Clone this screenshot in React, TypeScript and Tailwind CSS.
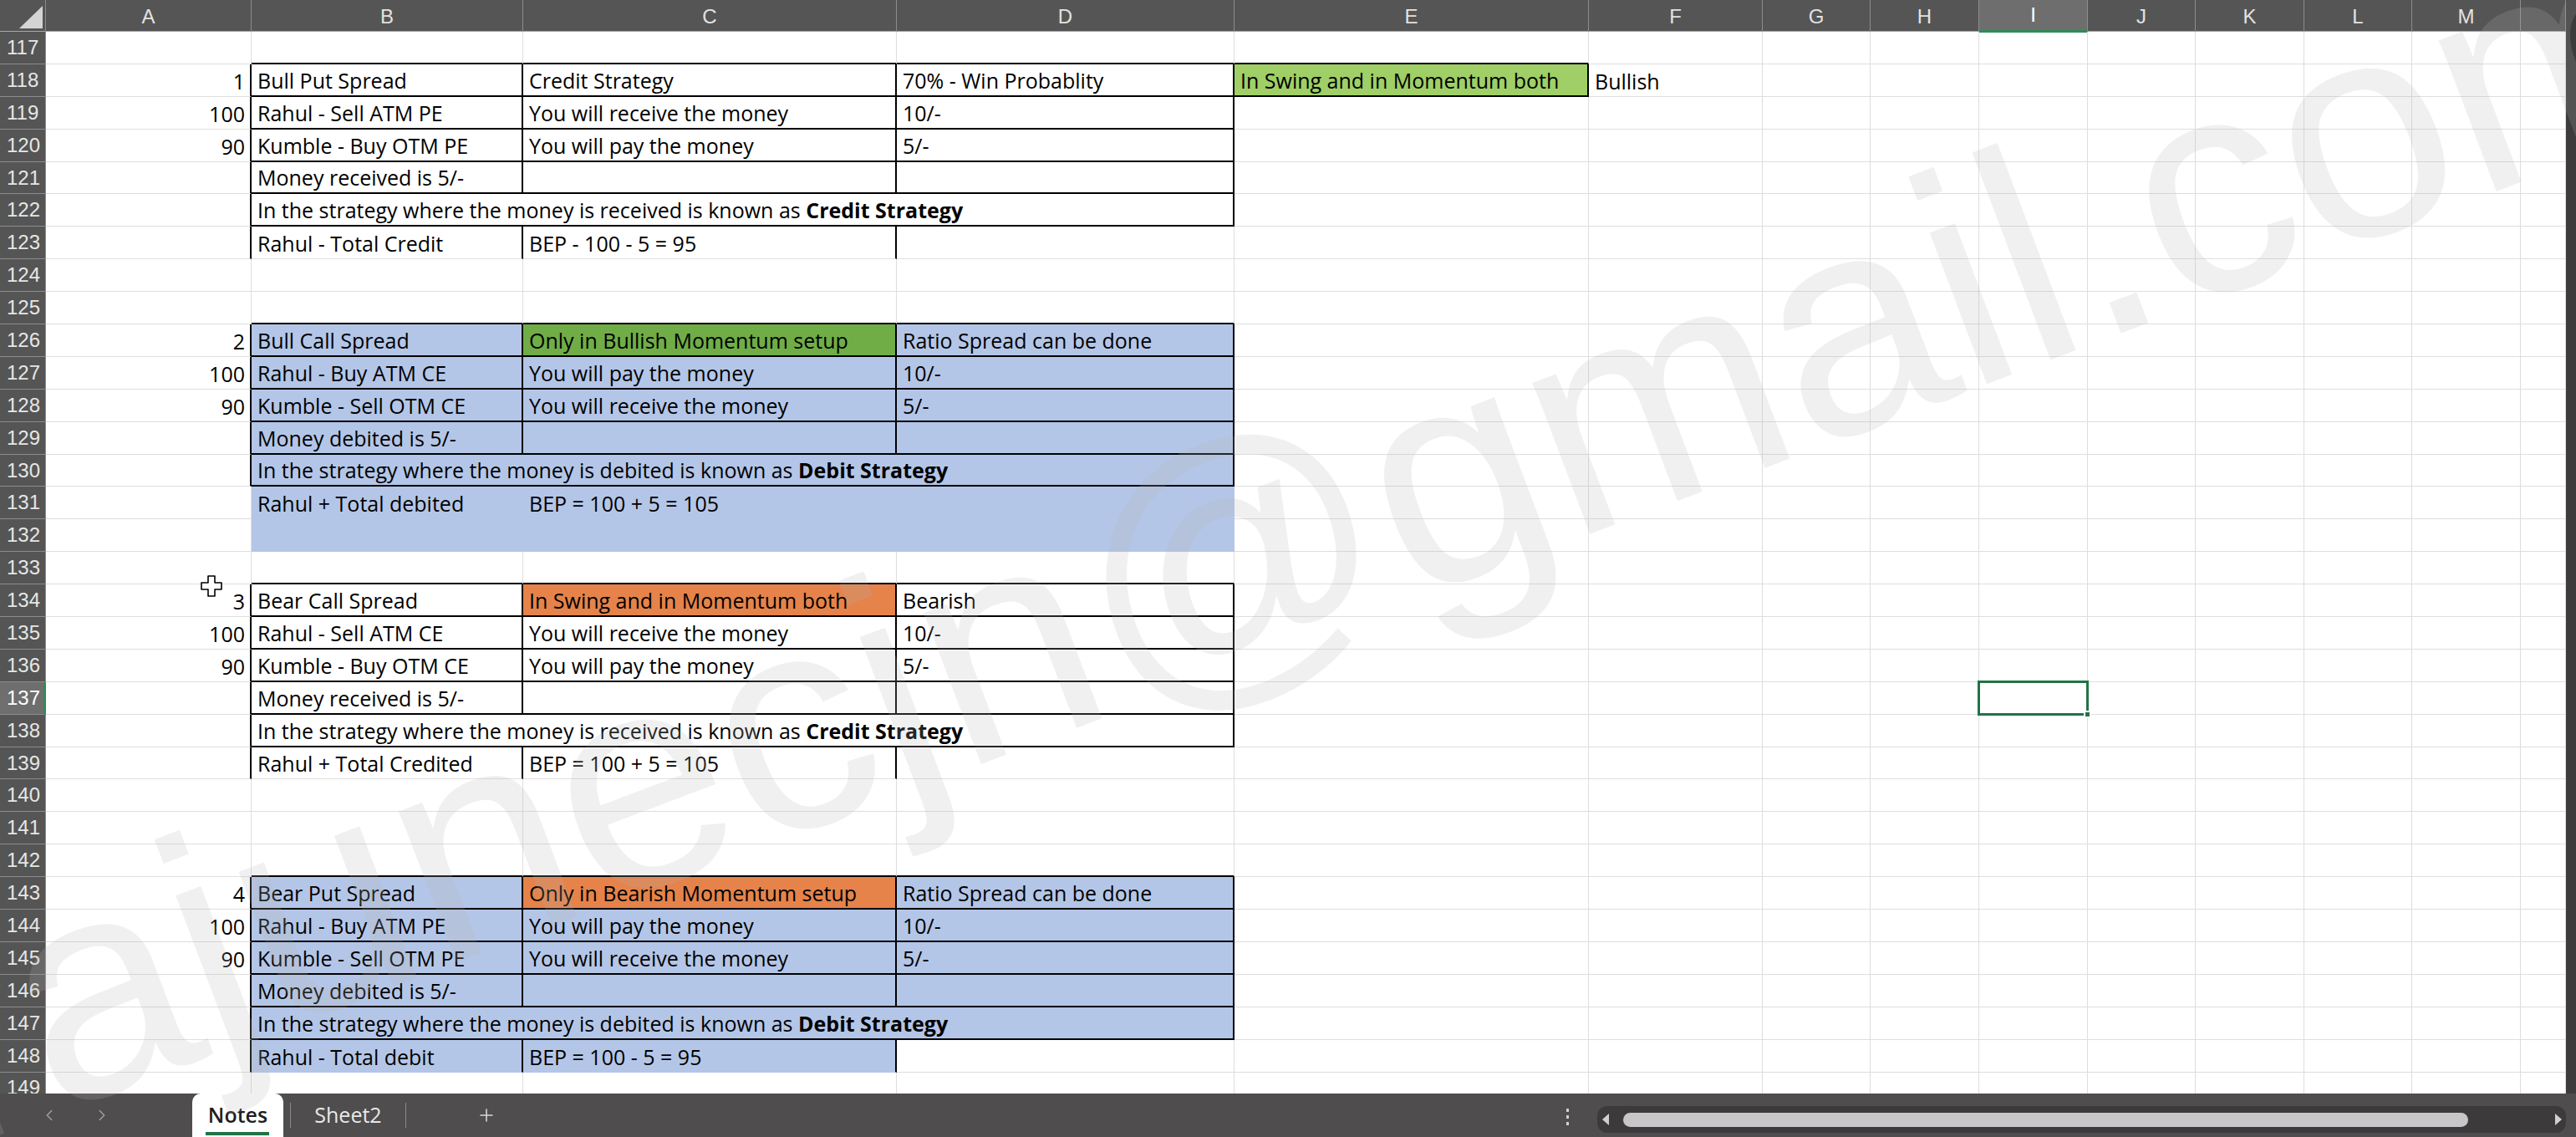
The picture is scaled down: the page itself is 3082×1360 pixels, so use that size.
import React from 'react';
import { ChevronLeft, ChevronRight, Plus } from 'lucide-react';

const COLS = ['A', 'B', 'C', 'D', 'E', 'F', 'G', 'H', 'I', 'J', 'K', 'L', 'M', 'N'];
const GRID =
  'grid grid-cols-[55px_246px_325px_447px_404px_424px_208px_129px_130px_130px_129px_130px_129px_130px_54px]';

type Row = { a?: string; b?: string; c?: string; d?: string; e?: string; f?: string; merged?: React.ReactNode };

const received = (
  <>
    In the strategy where the money is received is known as <b className="font-bold">Credit Strategy</b>
  </>
);
const debited = (
  <>
    In the strategy where the money is debited is known as <b className="font-bold">Debit Strategy</b>
  </>
);

const DATA: Record<number, Row> = {
  118: { a: '1', b: 'Bull Put Spread', c: 'Credit Strategy', d: '70% - Win Probablity', e: 'In Swing and in Momentum both', f: 'Bullish' },
  119: { a: '100', b: 'Rahul - Sell ATM PE', c: 'You will receive the money', d: '10/-' },
  120: { a: '90', b: 'Kumble - Buy OTM PE', c: 'You will pay the money', d: '5/-' },
  121: { b: 'Money received is 5/-' },
  122: { merged: received },
  123: { b: 'Rahul - Total Credit', c: 'BEP - 100 - 5 = 95' },
  126: { a: '2', b: 'Bull Call Spread', c: 'Only in Bullish Momentum setup', d: 'Ratio Spread can be done' },
  127: { a: '100', b: 'Rahul - Buy ATM CE', c: 'You will pay the money', d: '10/-' },
  128: { a: '90', b: 'Kumble - Sell OTM CE', c: 'You will receive the money', d: '5/-' },
  129: { b: 'Money debited is 5/-' },
  130: { merged: debited },
  131: { b: 'Rahul + Total debited', c: 'BEP = 100 + 5 = 105' },
  134: { a: '3', b: 'Bear Call Spread', c: 'In Swing and in Momentum both', d: 'Bearish' },
  135: { a: '100', b: 'Rahul - Sell ATM CE', c: 'You will receive the money', d: '10/-' },
  136: { a: '90', b: 'Kumble - Buy OTM CE', c: 'You will pay the money', d: '5/-' },
  137: { b: 'Money received is 5/-' },
  138: { merged: received },
  139: { b: 'Rahul + Total Credited', c: 'BEP = 100 + 5 = 105' },
  143: { a: '4', b: 'Bear Put Spread', c: 'Only in Bearish Momentum setup', d: 'Ratio Spread can be done' },
  144: { a: '100', b: 'Rahul - Buy ATM PE', c: 'You will pay the money', d: '10/-' },
  145: { a: '90', b: 'Kumble - Sell OTM PE', c: 'You will receive the money', d: '5/-' },
  146: { b: 'Money debited is 5/-' },
  147: { merged: debited },
  148: { b: 'Rahul - Total debit', c: 'BEP = 100 - 5 = 95' },
};

const ROWS = Array.from({ length: 33 }, (_, i) => 117 + i);
const MERGED = [122, 130, 138, 147];
const PARTIAL = [123, 139, 148];

const boxed = (r: number, c: number) => {
  if (r === 118 && c === 4) return true;
  if (c < 1 || c > 3) return false;
  return (r >= 118 && r <= 122) || (r >= 126 && r <= 130) || (r >= 134 && r <= 138) || (r >= 143 && r <= 147);
};

const fillOf = (r: number, c: number) => {
  if (r === 118 && c === 4) return 'bg-[#9fcf66]';
  if (r === 126 && c === 2) return 'bg-[#70ad47]';
  if ((r === 134 || r === 143) && c === 2) return 'bg-[#e5834a]';
  if (r >= 126 && r <= 132 && c >= 1 && c <= 3) return 'bg-[#b4c6e7]';
  if (r >= 143 && r <= 147 && c >= 1 && c <= 3) return 'bg-[#b4c6e7]';
  if (r === 148 && (c === 1 || c === 2)) return 'bg-[#b4c6e7]';
  return '';
};

function Cell({ r, c, span, children, right }: { r: number; c: number; span?: boolean; children?: React.ReactNode; right?: boolean }) {
  const fill = fillOf(r, c);
  const lastC = span ? 3 : c;
  const blackR = boxed(r, lastC) || boxed(r, lastC + 1) || (PARTIAL.includes(r) && c <= 2);
  const blackB = boxed(r, c) || boxed(r + 1, c);
  const rCls = blackR ? 'border-r-2 border-r-black' : fill ? 'border-r border-r-transparent' : 'border-r border-r-[#dedede]';
  const bCls = blackB ? 'border-b-2 border-b-black' : fill ? 'border-b border-b-transparent' : 'border-b border-b-[#dedede]';
  const sel = r === 137 && c === 8;
  return (
    <div
      className={`relative flex items-end whitespace-nowrap leading-[30px] pb-[3px] text-[25px] text-black font-['Open_Sans',sans-serif] ${
        span ? 'col-span-3' : ''
      } ${right ? 'justify-end pr-[6px]' : 'pl-[7px]'} ${fill} ${rCls} ${bCls}`}
    >
      {children}
      {sel && (
        <div className="absolute -inset-[2px] z-10 border-[3px] border-[#217346]">
          <div className="absolute -right-[6px] -bottom-[6px] w-[9px] h-[9px] bg-[#217346] border-2 border-white" />
        </div>
      )}
    </div>
  );
}

function SheetRow({ r }: { r: number }) {
  const d = DATA[r] || {};
  const sel = r === 137;
  const cells: React.ReactNode[] = [];
  COLS.forEach((_, c) => {
    if (MERGED.includes(r) && (c === 2 || c === 3)) return;
    if (MERGED.includes(r) && c === 1) {
      cells.push(
        <Cell key={c} r={r} c={c} span>
          <span>{d.merged}</span>
        </Cell>
      );
      return;
    }
    const text = [d.a, d.b, d.c, d.d, d.e, d.f][c];
    cells.push(
      <Cell key={c} r={r} c={c} right={c === 0}>
        {text}
      </Cell>
    );
  });
  return (
    <>
      <div
        className={`flex items-center pl-[8px] text-[24px] border-b border-b-[#8c8c8c] ${
          sel ? 'bg-[#6e6e6e] text-white border-r-[3px] border-r-[#2e8b57]' : 'bg-[#555555] text-[#e6e6e6] border-r border-r-[#8c8c8c]'
        }`}
      >
        {r}
      </div>
      {cells}
    </>
  );
}

function Header() {
  return (
    <div className={`${GRID} h-[38px] bg-[#555555] border-b border-b-[#a6a6a6]`}>
      <div className="relative border-r border-r-[#8c8c8c]">
        <svg className="absolute left-0 top-0" width="55" height="38" viewBox="0 0 55 38">
          <polygon points="23,34 51,34 51,7" fill="#d4d4d4" />
        </svg>
      </div>
      {COLS.map((l) => (
        <div
          key={l}
          className={`flex items-center justify-center text-[24px] border-r border-r-[#8c8c8c] ${
            l === 'I' ? 'bg-[#6e6e6e] text-white border-b-[3px] border-b-[#2e8b57]' : 'text-[#e2e2e2]'
          }`}
        >
          {l === 'N' ? '' : l}
        </div>
      ))}
    </div>
  );
}

function TabBar() {
  return (
    <div className="h-[52px] bg-[#4f4d4d] flex items-stretch font-['Open_Sans',sans-serif]">
      <div className="w-[230px] flex items-center pl-[48px] gap-[41px] text-[#a0a0a0]">
        <ChevronLeft size={22} strokeWidth={1.6} />
        <ChevronRight size={22} strokeWidth={1.6} />
      </div>
      <div className="relative w-[109px] bg-white rounded-t-[10px] flex items-center justify-center text-[25px] font-semibold text-[#1e1e1e]">
        Notes
        <div className="absolute left-[16px] bottom-[2px] w-[76px] h-[4px] bg-[#217346]" />
      </div>
      <div className="ml-[8px] w-px h-[30px] self-center bg-[#8a8a8a]" />
      <div className="w-[137px] flex items-center justify-center text-[25px] text-[#e8e8e8]">Sheet2</div>
      <div className="w-px h-[30px] self-center bg-[#8a8a8a]" />
      <div className="ml-[84px] flex items-center text-[#d6d6d6]">
        <Plus size={24} strokeWidth={1.6} />
      </div>
      <div className="flex-1" />
      <div className="flex flex-col gap-[4px] self-center mt-[4px]">
        <div className="w-[3px] h-[4px] bg-[#d0d0d0]" />
        <div className="w-[3px] h-[4px] bg-[#d0d0d0]" />
        <div className="w-[3px] h-[4px] bg-[#d0d0d0]" />
      </div>
      <div className="ml-[34px] mr-[12px] w-[1159px] h-[32px] self-end mb-[5px] bg-[#3c3a3a] rounded-[12px] flex items-center pl-[5px] pr-[4px]">
        <svg width="10" height="16" viewBox="0 0 10 16">
          <polygon points="9,1 9,15 1,8" fill="#d0d0d0" />
        </svg>
        <div className="ml-[16px] w-[1011px] h-[17px] rounded-full bg-[#c8c6c8]" />
        <div className="flex-1" />
        <svg width="10" height="16" viewBox="0 0 10 16">
          <polygon points="1,1 1,15 9,8" fill="#d0d0d0" />
        </svg>
      </div>
    </div>
  );
}

export default function App() {
  return (
    <div className="relative w-[3082px] h-[1360px] overflow-hidden bg-white font-['Liberation_Sans',Arial,sans-serif]">
      <div className="flex h-[1308px]">
        <div className="w-[3070px] flex flex-col">
          <Header />
          <div className={`${GRID} auto-rows-[38.9px] flex-1 overflow-hidden`}>
            {ROWS.map((r) => (
              <SheetRow key={r} r={r} />
            ))}
          </div>
        </div>
        <div className="w-[12px] bg-[#3d3b3b]" />
      </div>
      <TabBar />

      {/* mouse cursor */}
      <svg className="absolute left-[240px] top-[688px] z-30" width="26" height="26" viewBox="0 0 26 26">
        <polygon
          points="9,1 17,1 17,9 25,9 25,17 17,17 17,25 9,25 9,17 1,17 1,9 9,9"
          fill="white"
          stroke="black"
          strokeWidth="1.6"
          strokeLinejoin="round"
        />
      </svg>

      {/* watermark */}
      <div className="pointer-events-none absolute inset-0 z-20 overflow-hidden">
        <div className="absolute left-[-82px] top-[1073px] origin-[0px_215px] rotate-[-20.7deg] whitespace-nowrap text-[366px] leading-[366px] text-[rgba(180,180,180,0.2)]">
          rajunecjn@gmail.com
        </div>
      </div>
    </div>
  );
}
